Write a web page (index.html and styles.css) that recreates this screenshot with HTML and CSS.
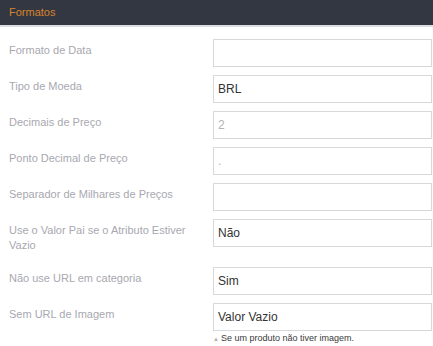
FILE: index.html
```html
<!DOCTYPE html>
<html lang="pt-BR">
<head>
    <meta charset="UTF-8">
    <meta name="viewport" content="width=device-width, initial-scale=1.0">
    <title>Formatos</title>
    <link rel="stylesheet" href="styles.css">
</head>
<body>
    <div class="panel">
        <div class="panel-header">Formatos</div>

        <div class="panel-body">
            <div class="field">
                <label class="field-label">Formato de Data</label>
                <div class="field-control"><div class="input"></div></div>
            </div>
            <div class="field">
                <label class="field-label">Tipo de Moeda</label>
                <div class="field-control"><div class="input value">BRL</div></div>
            </div>
            <div class="field">
                <label class="field-label">Decimais de Preço</label>
                <div class="field-control"><div class="input placeholder">2</div></div>
            </div>
            <div class="field">
                <label class="field-label">Ponto Decimal de Preço</label>
                <div class="field-control"><div class="input placeholder">.</div></div>
            </div>
            <div class="field">
                <label class="field-label">Separador de Milhares de Preços</label>
                <div class="field-control"><div class="input"></div></div>
            </div>
            <div class="field">
                <label class="field-label">Use o Valor Pai se o Atributo Estiver Vazio</label>
                <div class="field-control"><div class="input value">Não</div></div>
            </div>
            <div class="field">
                <label class="field-label">Não use URL em categoria</label>
                <div class="field-control"><div class="input value">Sim</div></div>
            </div>
            <div class="field">
                <label class="field-label">Sem URL de Imagem</label>
                <div class="field-control">
                    <div class="input value">Valor Vazio</div>
                    <div class="hint"><span class="hint-icon">▲</span>Se um produto não tiver imagem.</div>
                </div>
            </div>
        </div>
    </div>
</body>
</html>
```

FILE: styles.css
```css
body {
    margin: 0;
    padding: 0;
    background-color: #ffffff;
    font-family: "Liberation Sans", Arial, sans-serif;
}

.panel-header {
    height: 25px;
    line-height: 24px;
    padding: 0 9px;
    background-color: #323741;
    border-bottom: 2px solid #dcdde0;
    color: #d9832c;
    font-size: 11px;
}

.panel-body {
    padding: 12px 1px 0 9px;
}

.field {
    display: grid;
    grid-template-columns: 204px 219px;
    margin-bottom: 8px;
}

.field-label {
    padding: 4px 10px 6px 0;
    font-size: 11px;
    line-height: 15px;
    color: #a8a8b0;
}

.input {
    box-sizing: border-box;
    height: 28px;
    padding: 0 4px;
    border: 1px solid #d8d8dc;
    font-size: 12px;
    line-height: 26px;
}

.input.value {
    color: #333333;
}

.input.placeholder {
    color: #b4b4b8;
}

.hint {
    margin-top: 2px;
    font-size: 9px;
    color: #3a3a3a;
}

.hint-icon {
    margin: 0 2px 0 0;
    font-size: 6px;
    color: #b0b0b0;
}
```
